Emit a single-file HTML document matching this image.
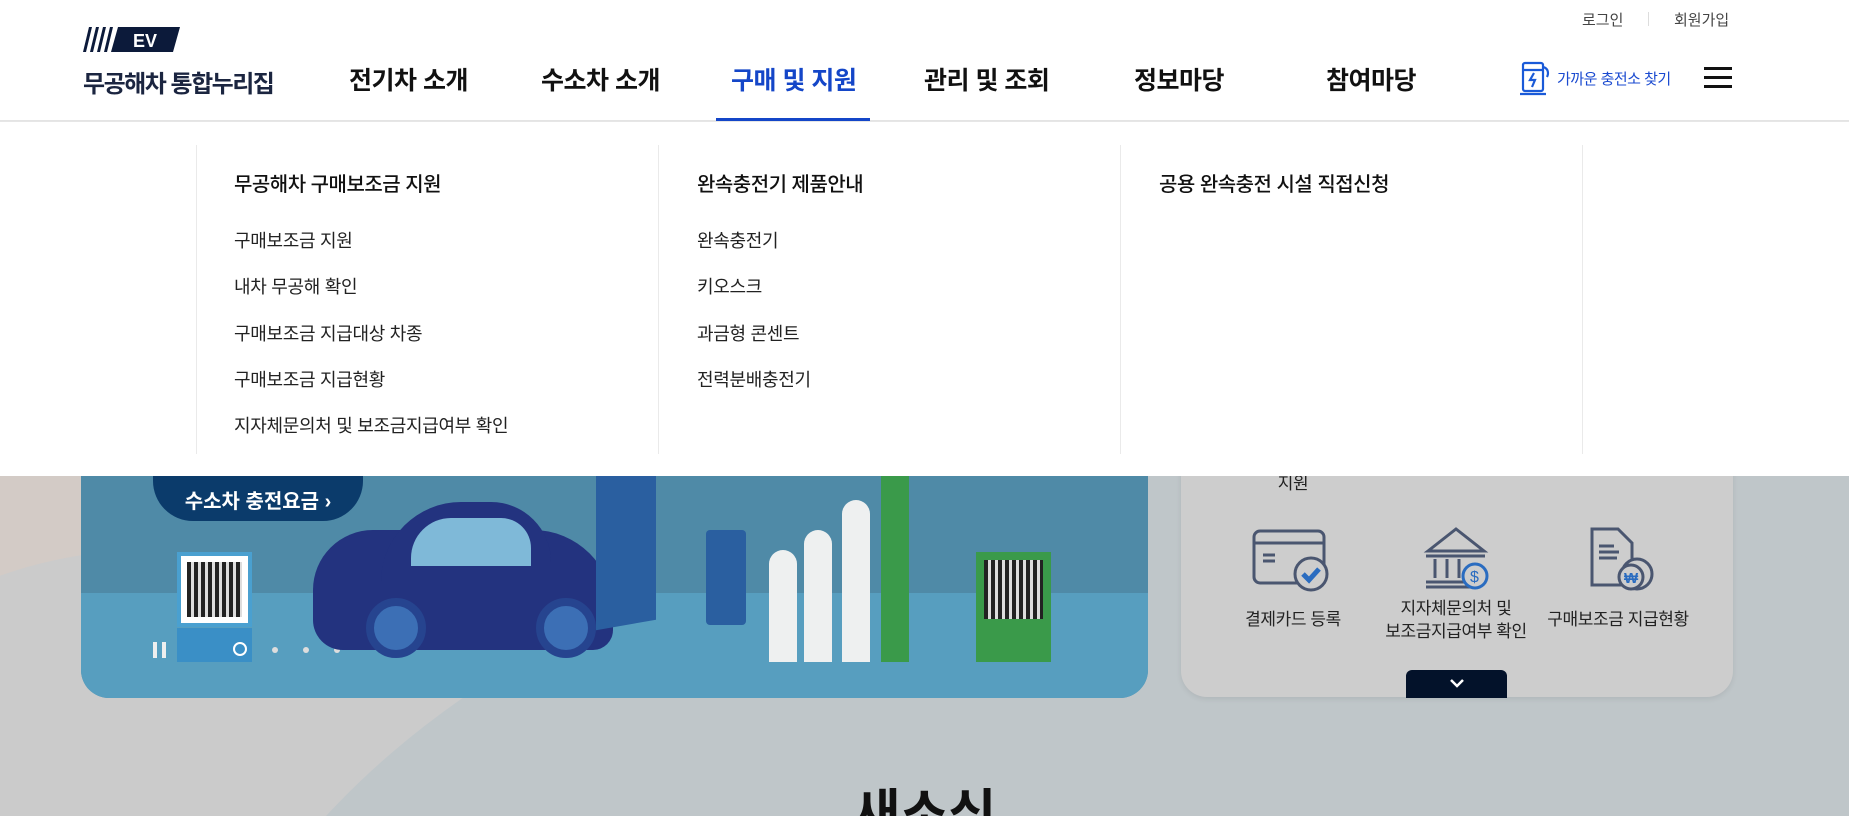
<!DOCTYPE html>
<html style="overflow:hidden;height:816px"><head><meta charset="utf-8"><style>
*{margin:0;padding:0;box-sizing:border-box}
html,body{overflow:hidden}
body{width:1849px;height:816px;position:relative;font-family:"Liberation Sans","Noto Sans CJK KR",sans-serif;background:#bfc6c9;color:#222}
#w{position:absolute;left:0;top:0;width:1849px;height:816px;overflow:hidden}
.abs{position:absolute}
.nav{position:absolute;top:61px;font-size:25px;font-weight:700;color:#111;letter-spacing:-0.5px;white-space:nowrap}
.dd{position:absolute;top:121px;left:0;width:1849px;height:355px;background:#fff;border-top:1px solid #e6e6e6}
.col{position:absolute;top:23px;height:309px;border-left:1px solid #eaeaea}
.h{position:absolute;font-size:20px;font-weight:500;color:#111;letter-spacing:-0.5px;white-space:nowrap}
.it{position:absolute;font-size:18px;color:#222;letter-spacing:-0.3px;white-space:nowrap}
.ct{position:absolute;font-size:17px;color:#222;text-align:center;width:200px;line-height:23px;letter-spacing:-0.4px}
</style></head><body><div id="w">
<div class="abs" style="left:0;top:476px;width:300px;height:340px;background:#d3cbc6"></div>
<div class="abs" style="left:-300px;top:550px;width:900px;height:900px;border-radius:50%;background:#cbcbcb"></div>
<div class="abs" style="left:175px;top:470px;width:2200px;height:1400px;border-radius:50%;background:#bfc6c9"></div>

<div class="abs" style="left:81px;top:440px;width:1067px;height:258px;border-radius:0 0 28px 28px;overflow:hidden;background:#4f8aa7">
 <div class="abs" style="left:0;top:153px;width:1067px;height:110px;background:#579ebf"></div>
 <div class="abs" style="left:72px;top:0;width:210px;height:81px;border-radius:0 0 40px 40px;background:#0b3b6b;color:#fff;font-size:20px;font-weight:700;text-align:center;padding-top:45px">수소차 충전요금 ›</div>
 <div class="abs" style="left:96px;top:112px;width:75px;height:75px;background:#fff;border:4px solid #4aa0d0"></div>
 <div class="abs" style="left:106px;top:122px;width:55px;height:55px;background:repeating-linear-gradient(90deg,#222 0 4px,#ddd 4px 7px)"></div>
 <div class="abs" style="left:96px;top:188px;width:75px;height:34px;background:#3a8fc6"></div>
 <div class="abs" style="left:72px;top:202px;width:4px;height:16px;background:#eee"></div>
 <div class="abs" style="left:81px;top:202px;width:4px;height:16px;background:#eee"></div>
 <div class="abs" style="left:152px;top:202px;width:14px;height:14px;border:2px solid #fff;border-radius:50%"></div>
 <div class="abs" style="left:191px;top:207px;width:6px;height:6px;background:#ddd;border-radius:50%"></div>
 <div class="abs" style="left:222px;top:207px;width:6px;height:6px;background:#ddd;border-radius:50%"></div>
 <div class="abs" style="left:253px;top:207px;width:6px;height:6px;background:#ddd;border-radius:50%"></div>
 <div class="abs" style="left:232px;top:90px;width:300px;height:120px;border-radius:60px 80px 20px 30px;background:#23337f"></div>
 <div class="abs" style="left:300px;top:62px;width:170px;height:80px;border-radius:80px 60px 0 0;background:#23337f"></div>
 <div class="abs" style="left:330px;top:78px;width:120px;height:48px;border-radius:40px 30px 0 0;background:#7fb9d8"></div>
 <div class="abs" style="left:285px;top:158px;width:60px;height:60px;border-radius:50%;background:#3c6fb5;border:8px solid #26448f"></div>
 <div class="abs" style="left:455px;top:158px;width:60px;height:60px;border-radius:50%;background:#3c6fb5;border:8px solid #26448f"></div>
 <div class="abs" style="left:515px;top:20px;width:60px;height:165px;background:#2a5fa0;transform:skewY(-10deg)"></div>
 <div class="abs" style="left:625px;top:90px;width:40px;height:95px;background:#2a5fa0;border-radius:4px"></div>
 <div class="abs" style="left:688px;top:110px;width:28px;height:112px;border-radius:14px 14px 0 0;background:#eef0f0"></div>
 <div class="abs" style="left:723px;top:90px;width:28px;height:132px;border-radius:14px 14px 0 0;background:#eef0f0"></div>
 <div class="abs" style="left:761px;top:60px;width:28px;height:162px;border-radius:14px 14px 0 0;background:#eef0f0"></div>
 <div class="abs" style="left:800px;top:20px;width:28px;height:202px;border-radius:14px 14px 0 0;background:#3a9a4a"></div>
 <div class="abs" style="left:895px;top:112px;width:75px;height:110px;background:#3a9a4a"></div>
 <div class="abs" style="left:903px;top:120px;width:59px;height:59px;background:repeating-linear-gradient(90deg,#222 0 4px,#ddd 4px 7px)"></div>
</div>

<div class="abs" style="left:1181px;top:440px;width:552px;height:257px;border-radius:0 0 26px 26px;background:#cdcdcd;box-shadow:0 2px 6px rgba(0,0,0,.08)">
 <div class="ct" style="left:12px;top:32px">지원</div>
 <svg class="abs" style="left:70px;top:88px" width="80" height="64" viewBox="0 0 80 64" fill="none" stroke="#4a5670" stroke-width="3"><rect x="3" y="3" width="70" height="52" rx="6"/><line x1="3" y1="15" x2="73" y2="15"/><line x1="12" y1="27" x2="24" y2="27"/><line x1="12" y1="33" x2="24" y2="33"/><circle cx="60" cy="46" r="16" fill="#cdcdcd"/><path d="M52 46l6 6 10-11" stroke="#2a6cc0" stroke-width="5"/></svg>
 <svg class="abs" style="left:242px;top:86px" width="70" height="68" viewBox="0 0 70 68" fill="none" stroke="#4a5670" stroke-width="3"><path d="M5 25L33 3 61 25Z"/><line x1="3" y1="30" x2="62" y2="30"/><line x1="12" y1="33" x2="12" y2="52"/><line x1="24" y1="33" x2="24" y2="52"/><line x1="36" y1="33" x2="36" y2="52"/><line x1="3" y1="56" x2="50" y2="56"/><line x1="3" y1="61" x2="50" y2="61"/><circle cx="52" cy="50" r="12" fill="#cdcdcd" stroke="#2a6cc0"/><text x="47" y="56" font-size="16" fill="#2a6cc0" stroke="none" font-family="Liberation Sans">$</text></svg>
 <svg class="abs" style="left:408px;top:86px" width="70" height="68" viewBox="0 0 70 68" fill="none" stroke="#4a5670" stroke-width="3"><path d="M3 3h26l14 14v42H3Z"/><line x1="10" y1="20" x2="25" y2="20"/><line x1="10" y1="26" x2="30" y2="26"/><line x1="10" y1="32" x2="28" y2="32"/><circle cx="48" cy="48" r="15" fill="#cdcdcd"/><circle cx="42" cy="51" r="12" fill="#cdcdcd" stroke="#4a5670"/><text x="35" y="57" font-size="15" font-weight="700" fill="#2a6cc0" stroke="none" font-family="Liberation Sans">₩</text></svg>
 <div class="ct" style="left:12px;top:168px">결제카드 등록</div>
 <div class="ct" style="left:175px;top:157px">지자체문의처 및<br>보조금지급여부 확인</div>
 <div class="ct" style="left:337px;top:168px">구매보조금 지급현황</div>
 <div class="abs" style="left:225px;top:230px;width:101px;height:28px;background:#03122a;border-radius:6px 6px 0 0"></div>
 <svg class="abs" style="left:268px;top:237px" width="16" height="12" viewBox="0 0 16 12" fill="none" stroke="#fff" stroke-width="2.5"><path d="M2 3l6 6 6-6"/></svg>
</div>

<div class="abs" style="left:0;top:772px;width:1849px;text-align:center;font-size:52px;font-weight:700;color:#111">새소식</div>

<div class="abs" style="left:0;top:0;width:1849px;height:121px;background:#fff;border-bottom:1px solid #e4e4e4"></div>
<svg class="abs" style="left:83px;top:27px" width="98" height="25" viewBox="0 0 98 25"><g fill="#0c1a3a"><polygon points="6,0 9,0 3,25 0,25"/><polygon points="13,0 16,0 10,25 7,25"/><polygon points="20,0 23,0 17,25 14,25"/><polygon points="27,0 30,0 24,25 21,25"/><polygon points="35,0 97,0 90,25 28,25"/></g><text x="50" y="20" fill="#fff" font-size="18" font-weight="700" font-family="Liberation Sans">EV</text></svg>
<div class="abs" style="left:83px;top:64px;font-size:24px;font-weight:700;color:#1b2540;letter-spacing:-1.5px">무공해차 통합누리집</div>
<div class="nav" style="left:349px">전기차 소개</div>
<div class="nav" style="left:541px">수소차 소개</div>
<div class="nav" style="left:731px;color:#1446c8">구매 및 지원</div>
<div class="nav" style="left:924px">관리 및 조회</div>
<div class="nav" style="left:1134px">정보마당</div>
<div class="nav" style="left:1326px">참여마당</div>
<div class="abs" style="left:716px;top:118px;width:154px;height:4px;background:#1446c8"></div>
<div class="abs" style="left:1582px;top:9px;font-size:15px;color:#444">로그인</div>
<div class="abs" style="left:1648px;top:12px;width:1px;height:14px;background:#ddd"></div>
<div class="abs" style="left:1674px;top:9px;font-size:15px;color:#444">회원가입</div>
<svg class="abs" style="left:1520px;top:61px" width="32" height="36" viewBox="0 0 32 36" fill="none" stroke="#1a5ad8" stroke-width="2.2"><rect x="3" y="2" width="20" height="28" rx="2"/><line x1="3" y1="9" x2="23" y2="9"/><path d="M14 12l-4 7h5l-3 7" /><path d="M23 6c5 1 6 6 4 10"/><line x1="0" y1="33" x2="26" y2="33"/></svg>
<div class="abs" style="left:1557px;top:68px;font-size:15px;color:#1a4ad0;letter-spacing:-0.5px">가까운 충전소 찾기</div>
<div class="abs" style="left:1704px;top:67px;width:28px;height:3px;background:#111"></div>
<div class="abs" style="left:1704px;top:76px;width:28px;height:3px;background:#111"></div>
<div class="abs" style="left:1704px;top:85px;width:28px;height:3px;background:#111"></div>

<div class="dd">
 <div class="col" style="left:196px"></div>
 <div class="col" style="left:658px"></div>
 <div class="col" style="left:1120px"></div>
 <div class="col" style="left:1582px"></div>
 <div class="h" style="left:234px;top:46px">무공해차 구매보조금 지원</div>
 <div class="it" style="left:234px;top:105px">구매보조금 지원</div>
 <div class="it" style="left:234px;top:151px">내차 무공해 확인</div>
 <div class="it" style="left:234px;top:198px">구매보조금 지급대상 차종</div>
 <div class="it" style="left:234px;top:244px">구매보조금 지급현황</div>
 <div class="it" style="left:234px;top:290px">지자체문의처 및 보조금지급여부 확인</div>
 <div class="h" style="left:697px;top:46px">완속충전기 제품안내</div>
 <div class="it" style="left:697px;top:105px">완속충전기</div>
 <div class="it" style="left:697px;top:151px">키오스크</div>
 <div class="it" style="left:697px;top:198px">과금형 콘센트</div>
 <div class="it" style="left:697px;top:244px">전력분배충전기</div>
 <div class="h" style="left:1159px;top:46px">공용 완속충전 시설 직접신청</div>
</div>
</div></body></html>
